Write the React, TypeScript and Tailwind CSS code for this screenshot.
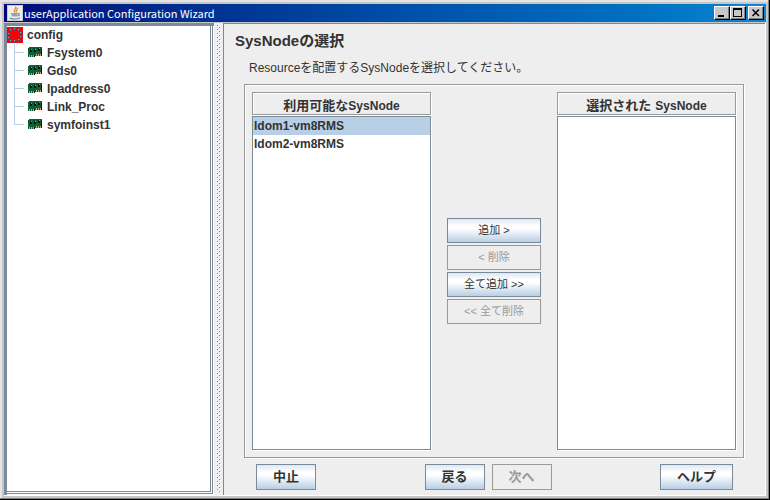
import { useState } from 'react';

const resources = ['Fsystem0', 'Gds0', 'Ipaddress0', 'Link_Proc', 'symfoinst1'];
const nodes = ['ldom1-vm8RMS', 'ldom2-vm8RMS'];

const enabledButton =
  'border border-[#7a8a99] bg-[linear-gradient(#dde8f3_0%,#ffffff_30%,#ffffff_42%,#b8cfe5_100%)] text-[#333333]';
const disabledButton = 'border border-[#999999] bg-[#eeeeee] text-[#999999]';
const windowButton =
  'flex h-3.5 w-4 items-center justify-center border border-t-white border-l-white border-r-black border-b-black bg-[#c8c8c8] shadow-[inset_-1px_-1px_0_#808080]';

function JavaIcon() {
  return (
    <svg width="16" height="16" viewBox="0 0 16 16" className="shrink-0" aria-hidden="true">
      <rect width="16" height="16" fill="#c8ccd0" />
      <rect x="1" y="1" width="14" height="14" fill="#eeeeee" />
      <path
        d="M8.5 1.5C10 3.5 6 4.5 7.8 7.5M10.8 3C8.8 4.5 10 5.5 9 7.5"
        fill="none"
        stroke="#e88a2c"
        strokeWidth="1.3"
      />
      <path d="M4 8H10.5L9.8 11.5H4.8Z" fill="#8fa3b5" />
      <path
        d="M10.5 8.5C13 8 13 11 10 11M3 12.5C2 14.5 12 14.5 13 12.5"
        fill="none"
        stroke="#6d8498"
        strokeWidth="1.2"
      />
    </svg>
  );
}

function ConfigIcon() {
  const dots = [
    [4, 3],
    [8, 2],
    [12, 3],
    [2, 7],
    [14, 6],
    [2, 11],
    [14, 10],
    [4, 14],
    [8, 14],
    [12, 13],
  ];
  return (
    <svg width="16" height="16" viewBox="0 0 16 16" className="shrink-0" aria-hidden="true">
      <rect width="16" height="16" fill="#ff0000" />
      {dots.map(([x, y]) => (
        <g key={`${x}-${y}`}>
          <circle cx={x} cy={y} r="1.5" fill="#1d5a8c" />
          <circle cx={x - 0.4} cy={y - 0.4} r="0.7" fill="#7fbfe6" />
        </g>
      ))}
    </svg>
  );
}

function BoardIcon() {
  return (
    <svg
      width="14"
      height="10"
      viewBox="0 0 14 10"
      className="shrink-0"
      shapeRendering="crispEdges"
      aria-hidden="true"
    >
      <path d="M1 0H14V9H7V10H0V1H1Z" fill="#0a6038" />
      <path d="M2 2H4V5H2ZM6 2H8V5H6ZM10 1H12V4H10ZM13 2H14V9H13ZM6 8H7V10H6Z" fill="#101010" />
      <path d="M3 2H4V3H3ZM7 2H8V3H7ZM11 1H12V2H11Z" fill="#8aa898" />
      <path d="M1 8H2V10H1ZM3 8H4V10H3ZM5 8H6V10H5ZM8 7H9V9H8ZM10 7H11V9H10ZM12 7H13V9H12Z" fill="#b5ad68" />
    </svg>
  );
}

function TitleBar() {
  return (
    <header className="flex h-[18px] shrink-0 items-center bg-linear-to-r from-[#00087c] to-[#1084d0] px-0.5 text-white">
      <div className="pl-px">
        <JavaIcon />
      </div>
      <h1 className="flex-1 pl-px font-['Noto_Sans_CJK_JP',sans-serif] text-[11px] leading-4">
        userApplication Configuration Wizard
      </h1>
      <button aria-label="最小化" className={windowButton}>
        <svg width="10" height="10" viewBox="0 0 10 10" shapeRendering="crispEdges">
          <path d="M1 7H7V9H1Z" fill="#000" />
        </svg>
      </button>
      <button aria-label="最大化" className={windowButton}>
        <svg width="10" height="10" viewBox="0 0 10 10" shapeRendering="crispEdges">
          <path d="M0 0H9V9H0ZM1 2V8H8V2Z" fill="#000" fillRule="evenodd" />
        </svg>
      </button>
      <button aria-label="閉じる" className={`${windowButton} ml-0.5`}>
        <svg width="10" height="10" viewBox="0 0 10 10">
          <path d="M1.5 1.5L8 8M8 1.5L1.5 8" stroke="#000" strokeWidth="1.5" />
        </svg>
      </button>
    </header>
  );
}

function ResourceTree() {
  return (
    <nav className="w-[210px] shrink-0 border-t-[3px] border-l-[3px] border-[#7a8a99] bg-white">
      <div className="h-full border-r border-b border-white">
        <div className="h-full border-r border-b border-[#7a8a99] pr-px pb-px">
          <div className="h-full border-r border-b border-[#7a8a99] font-bold">
            <div className="flex h-[18px] items-center gap-1">
              <ConfigIcon />
              config
            </div>
            <ul className="pl-[7px]">
              {resources.map((name, i) => (
                <li key={name} className="flex h-[18px] items-center">
                  <span className="flex h-full w-3.5 flex-col pr-1">
                    <span className="h-1/2 w-full border-b border-l border-[#b8cfe5]" />
                    {i < resources.length - 1 && <span className="h-1/2 border-l border-[#b8cfe5]" />}
                    {i === resources.length - 1 && <span className="h-1/2" />}
                  </span>
                  <span className="pr-[5px] pb-0.5">
                    <BoardIcon />
                  </span>
                  {name}
                </li>
              ))}
            </ul>
          </div>
        </div>
      </div>
    </nav>
  );
}

interface NodeListProps {
  title: React.ReactNode;
  label: string;
  items: string[];
  selected: string;
  onSelect: (name: string) => void;
}

function NodeList({ title, label, items, selected, onSelect }: NodeListProps) {
  return (
    <section className="flex flex-col gap-px">
      <h3 className="flex h-[23px] items-center justify-center border border-[#999999] pt-1 font-bold shadow-[inset_1px_1px_0_#fff,1px_1px_0_#fff]">
        {title}
      </h3>
      <ul
        role="listbox"
        aria-label={label}
        className="flex-1 border border-[#7a8a99] bg-white shadow-[1px_1px_0_#fff]"
      >
        {items.map((name) => (
          <li key={name} role="option" aria-selected={name === selected}>
            <button
              onClick={() => onSelect(name)}
              className={`block h-[18px] w-full pl-px text-left font-bold ${name === selected ? 'bg-[#b8cfe5]' : ''}`}
            >
              {name}
            </button>
          </li>
        ))}
      </ul>
    </section>
  );
}

export default function App() {
  const [available, setAvailable] = useState(nodes);
  const [chosen, setChosen] = useState<string[]>([]);
  const [selected, setSelected] = useState(nodes[0]);

  const canAdd = available.includes(selected);
  const canRemove = chosen.includes(selected);

  const moves = [
    {
      label: '追加 >',
      enabled: canAdd,
      run: () => {
        setAvailable(available.filter((n) => n !== selected));
        setChosen([...chosen, selected]);
      },
    },
    {
      label: '< 削除',
      enabled: canRemove,
      run: () => {
        setChosen(chosen.filter((n) => n !== selected));
        setAvailable([...available, selected]);
      },
    },
    {
      label: '全て追加 >>',
      enabled: available.length > 0,
      run: () => {
        setAvailable([]);
        setChosen(nodes);
      },
    },
    {
      label: '<< 全て削除',
      enabled: chosen.length > 0,
      run: () => {
        setAvailable(nodes);
        setChosen([]);
      },
    },
  ];

  return (
    <div className="flex h-screen flex-col border-r border-b border-black bg-[#c6c6c6] p-1 pr-[3px] pb-[3px] font-['Liberation_Sans','Noto_Sans_CJK_JP',sans-serif] text-xs text-[#333333] shadow-[inset_-1px_-1px_0_#808080,inset_2px_2px_0_#e4e4e4]">
      <TitleBar />
      <div className="flex min-h-0 flex-1 border-t border-r border-b border-t-[#c6c6c6] border-r-white border-b-white bg-[#eeeeee]">
        <ResourceTree />
        <div className="flex w-[9px] shrink-0 justify-center py-0.5">
          <svg className="h-full w-1" shapeRendering="crispEdges" aria-hidden="true">
            <pattern id="grip" width="4" height="4" patternUnits="userSpaceOnUse">
              <rect width="1" height="1" fill="#7a8a99" />
              <rect x="2" y="2" width="1" height="1" fill="#7a8a99" />
              <rect x="1" y="1" width="1" height="1" fill="#ffffff" />
              <rect x="3" y="3" width="1" height="1" fill="#ffffff" />
            </pattern>
            <rect width="4" height="100%" fill="url(#grip)" />
          </svg>
        </div>
        <main className="flex min-w-0 flex-1 flex-col border-t border-l border-[#7a8a99] pr-[21px] pb-[5px] pl-5">
          <h2 className="-ml-[9px] pt-[5px] text-[15px] leading-6 font-bold">SysNodeの選択</h2>
          <p className="pt-1.5 pb-[7px] pl-[5px] leading-[18px]">
            Resourceを配置するSysNodeを選択してください。
          </p>
          <div className="grid flex-1 grid-cols-[37fr_26fr_37fr] border border-[#999999] p-[7px] shadow-[inset_1px_1px_0_#fff,1px_1px_0_#fff]">
            <NodeList
              title={
                <>
                  <span className="text-[13px]">利用可能な</span>SysNode
                </>
              }
              label="利用可能なSysNode"
              items={available}
              selected={selected}
              onSelect={setSelected}
            />
            <div className="flex flex-col justify-center gap-0.5 px-4">
              {moves.map((move) => (
                <button
                  key={move.label}
                  disabled={!move.enabled}
                  onClick={move.run}
                  className={`h-[25px] text-[11px] ${move.enabled ? enabledButton : disabledButton}`}
                >
                  {move.label}
                </button>
              ))}
            </div>
            <NodeList
              title={
                <>
                  <span className="pr-1 text-[13px]">選択された</span>SysNode
                </>
              }
              label="選択された SysNode"
              items={chosen}
              selected={selected}
              onSelect={setSelected}
            />
          </div>
          <footer className="flex justify-between pt-1.5 pr-[11px] pl-3 text-[13px] font-bold">
            <button className={`h-[26px] w-[60px] ${enabledButton}`}>中止</button>
            <div className="flex gap-[7px]">
              <button className={`h-[26px] w-[60px] ${enabledButton}`}>戻る</button>
              <button disabled className={`h-[26px] w-[60px] ${disabledButton}`}>
                次へ
              </button>
            </div>
            <button className={`h-[26px] w-[73px] ${enabledButton}`}>ヘルプ</button>
          </footer>
        </main>
      </div>
    </div>
  );
}
